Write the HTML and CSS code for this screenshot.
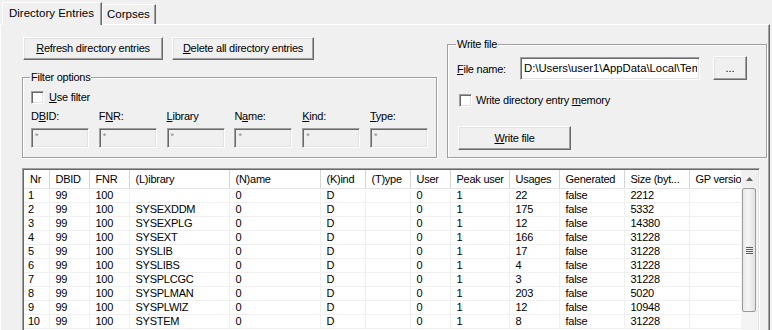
FILE: index.html
```html
<!DOCTYPE html>
<html>
<head>
<meta charset="utf-8">
<title>Directory Entries</title>
<link rel="stylesheet" href="styles.css">
</head>
<body>
<div class="win">
  <div class="tabs">
    <div class="tab active">Directory Entries</div>
    <div class="tab">Corpses</div>
  </div>
  <div class="panel">
    <div class="top">
      <div class="left">
        <div class="btnrow">
          <button class="btn btn-refresh"><u>R</u>efresh directory entries</button>
          <button class="btn btn-delete"><u>D</u>elete all directory entries</button>
        </div>
        <fieldset class="group filter">
          <legend>Filter options</legend>
          <div class="check"><span class="box"></span><span><u>U</u>se filter</span></div>
          <div class="fields">
            <div class="field"><span class="flabel">D<u>B</u>ID:</span><span class="finput">*</span></div>
            <div class="field"><span class="flabel">F<u>N</u>R:</span><span class="finput">*</span></div>
            <div class="field"><span class="flabel"><u>L</u>ibrary</span><span class="finput">*</span></div>
            <div class="field"><span class="flabel">N<u>a</u>me:</span><span class="finput">*</span></div>
            <div class="field"><span class="flabel"><u>K</u>ind:</span><span class="finput">*</span></div>
            <div class="field"><span class="flabel"><u>T</u>ype:</span><span class="finput">*</span></div>
          </div>
        </fieldset>
      </div>
      <fieldset class="group write">
        <legend>Write file</legend>
        <div class="filerow">
          <span class="fnlabel"><u>F</u>ile name:</span>
          <span class="textbox"><span class="tbtext">D:\Users\user1\AppData\Local\Temp</span></span>
          <button class="btn btn-browse">...</button>
        </div>
        <div class="check check-mem"><span class="box"></span><span>Write directory entry <u>m</u>emory</span></div>
        <button class="btn btn-write"><u>W</u>rite file</button>
      </fieldset>
    </div>
    <div class="list">
      <div class="grid">
        <table>
          <colgroup>
            <col class="c-nr"><col class="c-dbid"><col class="c-fnr"><col class="c-lib"><col class="c-name"><col class="c-kind"><col class="c-type"><col class="c-user"><col class="c-peak"><col class="c-usages"><col class="c-gen"><col class="c-size"><col class="c-gp">
          </colgroup>
          <thead>
            <tr><th>Nr</th><th>DBID</th><th>FNR</th><th>(L)ibrary</th><th>(N)ame</th><th>(K)ind</th><th>(T)ype</th><th>User</th><th>Peak user</th><th>Usages</th><th>Generated</th><th>Size (byt...</th><th>GP version</th></tr>
          </thead>
          <tbody>
            <tr><td>1</td><td>99</td><td>100</td><td></td><td>0</td><td>D</td><td></td><td>0</td><td>1</td><td>22</td><td>false</td><td>2212</td><td></td></tr>
            <tr><td>2</td><td>99</td><td>100</td><td>SYSEXDDM</td><td>0</td><td>D</td><td></td><td>0</td><td>1</td><td>175</td><td>false</td><td>5332</td><td></td></tr>
            <tr><td>3</td><td>99</td><td>100</td><td>SYSEXPLG</td><td>0</td><td>D</td><td></td><td>0</td><td>1</td><td>12</td><td>false</td><td>14380</td><td></td></tr>
            <tr><td>4</td><td>99</td><td>100</td><td>SYSEXT</td><td>0</td><td>D</td><td></td><td>0</td><td>1</td><td>166</td><td>false</td><td>31228</td><td></td></tr>
            <tr><td>5</td><td>99</td><td>100</td><td>SYSLIB</td><td>0</td><td>D</td><td></td><td>0</td><td>1</td><td>17</td><td>false</td><td>31228</td><td></td></tr>
            <tr><td>6</td><td>99</td><td>100</td><td>SYSLIBS</td><td>0</td><td>D</td><td></td><td>0</td><td>1</td><td>4</td><td>false</td><td>31228</td><td></td></tr>
            <tr><td>7</td><td>99</td><td>100</td><td>SYSPLCGC</td><td>0</td><td>D</td><td></td><td>0</td><td>1</td><td>3</td><td>false</td><td>31228</td><td></td></tr>
            <tr><td>8</td><td>99</td><td>100</td><td>SYSPLMAN</td><td>0</td><td>D</td><td></td><td>0</td><td>1</td><td>203</td><td>false</td><td>5020</td><td></td></tr>
            <tr><td>9</td><td>99</td><td>100</td><td>SYSPLWIZ</td><td>0</td><td>D</td><td></td><td>0</td><td>1</td><td>12</td><td>false</td><td>10948</td><td></td></tr>
            <tr><td>10</td><td>99</td><td>100</td><td>SYSTEM</td><td>0</td><td>D</td><td></td><td>0</td><td>1</td><td>8</td><td>false</td><td>31228</td><td></td></tr>
          </tbody>
        </table>
      </div>
      <div class="vscroll">
        <div class="sb-up"><svg width="7" height="4" viewBox="0 0 7 4"><path d="M0 4 L3.5 0 L7 4 Z" fill="#606060"/></svg></div>
        <div class="sb-track">
          <div class="sb-thumb"><span class="grip"></span></div>
        </div>
      </div>
    </div>
  </div>
</div>
</body>
</html>
```

FILE: styles.css
```css
* { box-sizing: border-box; }
html, body {
  margin: 0;
  padding: 0;
  background: #f0f0f0;
  overflow: hidden;
}
body {
  width: 772px;
  height: 330px;
  font-family: "Liberation Sans", Arial, sans-serif;
  font-size: 11px;
  letter-spacing: -0.25px;
  color: #000;
}
u { text-decoration: underline; text-underline-offset: 1px; }

.win { width: 772px; }

/* tabs */
.tabs {
  display: flex;
  align-items: flex-end;
  height: 24px;
  padding-left: 2px;
  position: relative;
  z-index: 1;
}
.tab {
  font-size: 11.5px;
  letter-spacing: 0;
  line-height: 14px;
  padding-top: 3px;
  background: #f0f0f0;
  border-top: 1px solid #fff;
  border-left: 1px solid #fff;
  border-right: 1px solid #696969;
  box-shadow: inset -1px 0 #a0a0a0;
  white-space: nowrap;
}
.tab.active {
  width: 100px;
  height: 23px;
  margin-bottom: -1px;
  padding-left: 6px;
}
.tab:not(.active) {
  width: 54px;
  height: 20px;
  padding-left: 4px;
  padding-top: 2px;
}

/* panel */
.panel {
  width: 770px;
  height: 320px;
  border-top: 1px solid #fff;
  border-left: 1px solid #fff;
  border-right: 1px solid #696969;
  box-shadow: inset -1px 0 #a0a0a0;
  padding-left: 21px;
}
.top {
  display: flex;
  align-items: flex-start;
}
.left {
  flex: none;
  width: 415px;
  padding-top: 12px;
}

/* buttons */
.btn {
  font-family: inherit;
  font-size: 11px;
  letter-spacing: -0.25px;
  color: #000;
  background: #f0f0f0;
  border: 1px solid;
  border-color: #fff #696969 #696969 #fff;
  box-shadow: inset -1px -1px #a0a0a0, inset 1px 1px #e3e3e3;
  padding: 0;
  margin: 0;
  border-radius: 0;
  line-height: 13px;
}
.btnrow {
  display: flex;
  gap: 9px;
  margin-left: 1px;
}
.btn-refresh { width: 140px; height: 23px; }
.btn-delete { width: 142px; height: 23px; }

/* group boxes */
.group {
  flex: none;
  margin: 0;
  padding: 0 8px 9px 8px;
  border: 1px solid #a0a0a0;
  box-shadow: inset 1px 1px #fff, 1px 1px #fff;
  min-width: 0;
}
.group legend {
  margin-left: -1px;
  padding: 0 1px;
  line-height: 13px;
  background: #f0f0f0;
}
.filter {
  margin-top: 11px;
  width: 415px;
  height: 87px;
}
.write {
  margin-top: 13px;
  margin-left: 10px;
  width: 320px;
  height: 120px;
  padding-left: 9px;
}

/* checkbox */
.check {
  display: flex;
  align-items: center;
  gap: 5px;
  height: 13px;
  line-height: 13px;
  margin-top: 7px;
}
.box {
  width: 13px;
  height: 13px;
  flex: none;
  background: #fff;
  border: 1px solid;
  border-color: #a0a0a0 #fff #fff #a0a0a0;
  box-shadow: inset 1px 1px #696969, inset -1px -1px #e3e3e3;
}

/* filter fields */
.fields {
  display: grid;
  grid-template-columns: repeat(6, 58px);
  column-gap: 9.8px;
  margin-top: 6px;
}
.field {
  display: flex;
  flex-direction: column;
}
.flabel {
  line-height: 13px;
  height: 13px;
  white-space: nowrap;
}
.finput {
  margin-top: 5px;
  height: 20px;
  border: 1px solid;
  border-color: #a0a0a0 #fff #fff #a0a0a0;
  box-shadow: inset 1px 1px #696969, inset -1px -1px #e3e3e3;
  background: #f0f0f0;
  color: #8a8a8a;
  font-size: 9px;
  line-height: 9px;
  padding: 3px 0 0 3px;
}

/* write file */
.filerow {
  display: flex;
  align-items: center;
  margin-top: 5px;
  height: 24px;
}
.fnlabel {
  width: 63px;
  flex: none;
  padding-top: 1px;
}
.textbox {
  width: 180px;
  height: 23px;
  flex: none;
  background: #fff;
  border: 1px solid;
  border-color: #a0a0a0 #fff #fff #a0a0a0;
  box-shadow: inset 1px 1px #696969, inset -1px -1px #e3e3e3;
  overflow: hidden;
  padding: 4px 2px 0 3px;
}
.tbtext {
  display: block;
  white-space: nowrap;
  overflow: hidden;
  font-size: 11.3px;
  line-height: 13px;
  letter-spacing: 0;
}
.btn-browse {
  width: 34px;
  height: 24px;
  margin-left: 13px;
  flex: none;
  letter-spacing: 0;
}
.check-mem {
  margin-top: 14px;
  margin-left: 2px;
  gap: 4px;
}
.btn-write {
  display: block;
  margin-top: 19px;
  margin-left: 1px;
  width: 113px;
  height: 24px;
}

/* list view */
.list {
  margin-top: 10px;
  width: 738px;
  height: 170px;
  display: flex;
  border: 1px solid;
  border-color: #a0a0a0 #fff #fff #a0a0a0;
  box-shadow: inset 1px 1px #696969, inset -1px -1px #e3e3e3;
  padding: 1px;
}
.grid {
  flex: 1;
  overflow: hidden;
  background: #fff;
}
table {
  border-collapse: collapse;
  table-layout: fixed;
  width: 735px;
}
col.c-nr { width: 25px; }
col.c-dbid { width: 40px; }
col.c-fnr { width: 40px; }
col.c-lib { width: 100px; }
col.c-name { width: 91px; }
col.c-kind { width: 45px; }
col.c-type { width: 45px; }
col.c-user { width: 40px; }
col.c-peak { width: 59px; }
col.c-usages { width: 50px; }
col.c-gen { width: 65px; }
col.c-size { width: 65px; }
col.c-gp { width: 70px; }

th {
  height: 18px;
  padding: 0 0 0 6px;
  font-weight: normal;
  text-align: left;
  white-space: nowrap;
  overflow: hidden;
  background: #fff;
  border-right: 1px solid #d5d5d5;
  border-bottom: 1px solid #e5e5e5;
  line-height: 16px;
}
td {
  height: 14px;
  padding: 0 0 0 6px;
  line-height: 13px;
  white-space: nowrap;
  overflow: hidden;
  border-right: 1px solid #f0f0f0;
  border-bottom: 1px solid #f0f0f0;
}
td:first-child { padding-left: 4px; }

/* scrollbar */
.vscroll {
  width: 17px;
  flex: none;
  display: flex;
  flex-direction: column;
  background: #f0f0f0;
}
.sb-up {
  height: 17px;
  display: flex;
  align-items: center;
  justify-content: center;
  background: #f0f0f0;
}
.sb-track {
  flex: 1;
  background: #f4f4f4;
  padding: 1px 2px 0 1px;
}
.sb-thumb {
  height: 124px;
  border: 1px solid #9a9a9a;
  border-radius: 2px;
  background: linear-gradient(to right, #e8e8e8, #f6f6f6 40%, #e2e2e2);
  display: flex;
  align-items: center;
  justify-content: center;
}
.grip {
  width: 7px;
  height: 7px;
  background: repeating-linear-gradient(to bottom, #5f5f5f 0 1px, transparent 1px 2px);
}
```
